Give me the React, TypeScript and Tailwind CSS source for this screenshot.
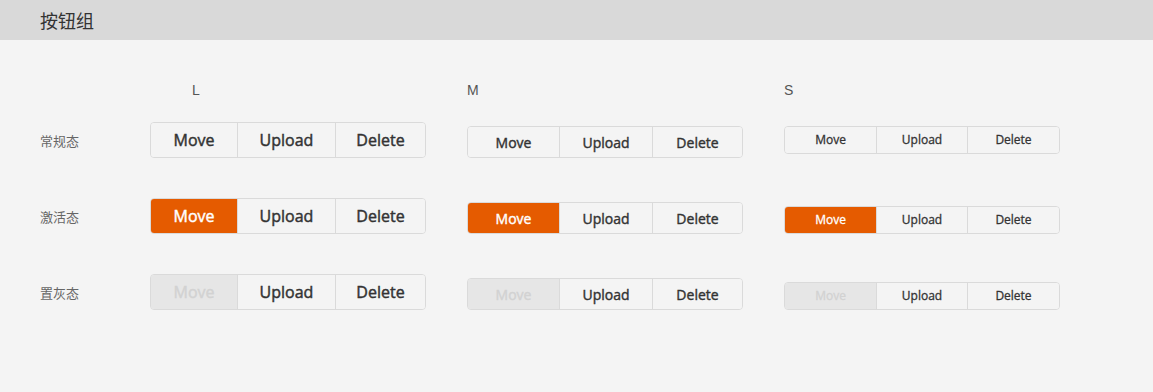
import React from "react";

type Size = "L" | "M" | "S";
type State = "normal" | "active" | "disabled";

const sizes: Record<Size, { h: string; text: string; widths: string[] }> = {
  L: { h: "h-9", text: "text-[16px] [-webkit-text-stroke:0.45px]", widths: ["w-[86px]", "w-[98px]", "w-[92px]"] },
  M: { h: "h-8", text: "text-[14px] [-webkit-text-stroke:0.4px]", widths: ["w-[91px]", "w-[93px]", "w-[92px]"] },
  S: { h: "h-7", text: "text-[12px] [-webkit-text-stroke:0.3px]", widths: ["w-[91px]", "w-[91px]", "w-[94px]"] },
};

const labels = ["Move", "Upload", "Delete"];

function ButtonGroup({ size, state, align }: { size: Size; state: State; align: string }) {
  const s = sizes[size];
  return (
    <div className={`flex ${s.h} ${align} w-[276px] rounded-[4px] border border-[#dadada] overflow-hidden`}>
      {labels.map((label, i) => {
        let tone = "bg-[#f4f4f4] text-[#333333]";
        if (i === 0 && state === "active") tone = "bg-[#e55b00] text-white";
        if (i === 0 && state === "disabled") tone = "bg-[#e6e6e6] text-[#d2d2d2]";
        return (
          <div
            key={label}
            className={`${s.widths[i]} ${tone} ${s.text} flex items-center justify-center ${
              i > 0 ? "border-l border-[#dadada]" : ""
            } ${i === 2 ? "flex-1" : ""}`}
          >
            {label}
          </div>
        );
      })}
    </div>
  );
}

const rows: { label: string; state: State; sAlign: string }[] = [
  { label: "常规态", state: "normal", sAlign: "self-center" },
  { label: "激活态", state: "active", sAlign: "self-end" },
  { label: "置灰态", state: "disabled", sAlign: "self-end" },
];

const cols = "grid grid-cols-[110px_317px_317px_276px]";

export default function App() {
  return (
    <div className="w-[1153px] h-[392px] bg-[#f4f4f4] font-['Open_Sans','Noto_Sans_CJK_SC',sans-serif]">
      <div className="h-10 bg-[#d9d9d9] flex items-center px-10 text-[18px] text-[#333333] font-['Noto_Sans_CJK_SC',sans-serif]">
        按钮组
      </div>

      <div className="pl-10 pt-[40px]">
        <div className={`${cols} text-[14px] text-[#555555] leading-5 font-['Liberation_Sans',sans-serif]`}>
          <div />
          <div className="pl-[42px]">L</div>
          <div>M</div>
          <div>S</div>
        </div>

        <div className="mt-[22px] flex flex-col gap-10">
          {rows.map((row) => (
            <div key={row.label} className={`${cols} h-9`}>
              <div className="self-center pt-[2px] text-[13px] text-[#666666] font-['Noto_Sans_CJK_SC',sans-serif]">
                {row.label}
              </div>
              <ButtonGroup size="L" state={row.state} align="self-start" />
              <ButtonGroup size="M" state={row.state} align="self-end" />
              <ButtonGroup size="S" state={row.state} align={row.sAlign} />
            </div>
          ))}
        </div>
      </div>
    </div>
  );
}
